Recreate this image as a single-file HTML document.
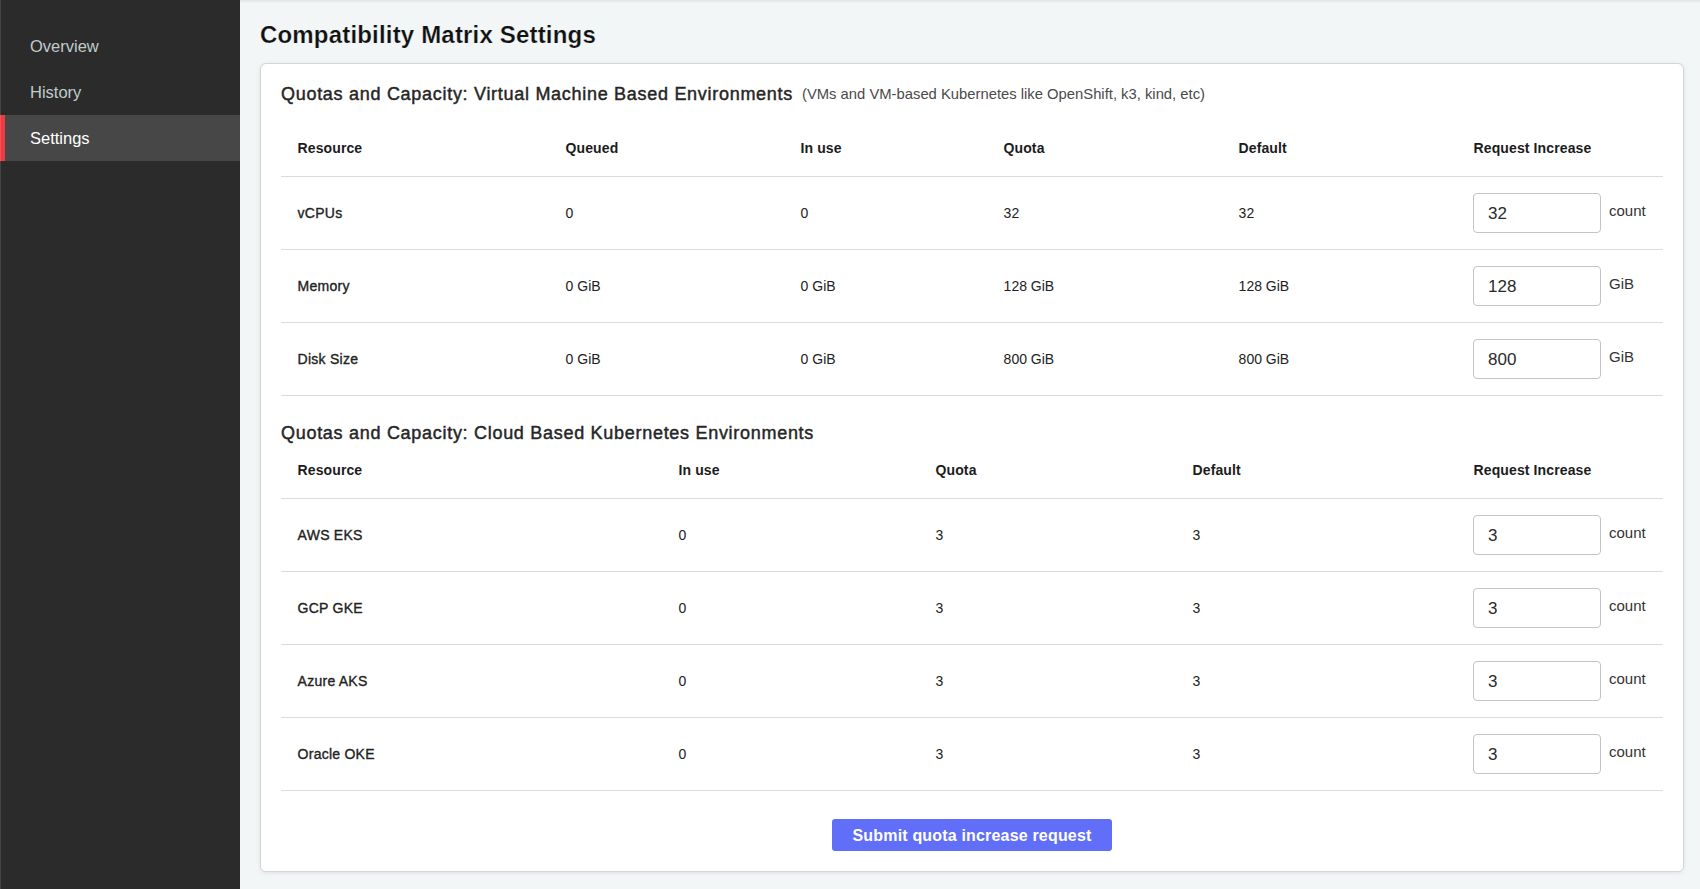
<!DOCTYPE html>
<html>
<head>
<meta charset="utf-8">
<style>
*{box-sizing:border-box;margin:0;padding:0}
html,body{width:1700px;height:889px;overflow:hidden}
body{font-family:"Liberation Sans",sans-serif;background:#f2f6f7;position:relative}
#side{position:absolute;left:0;top:0;width:240px;height:889px;background:#2b2b2b}
#side .it{position:absolute;left:0;width:240px;height:46px;color:#c0cccc;font-size:16.5px;padding-left:30px;line-height:47px}
#side .act{background:#474747;color:#fff}
#side .act::before{content:"";position:absolute;left:0;top:0;width:5px;height:46px;background:#f03a42}
#topshadow{position:absolute;left:240px;top:0;width:1460px;height:3px;background:linear-gradient(#dee2e3,#f2f6f7)}
h1{position:absolute;left:260px;top:21px;font-size:24px;font-weight:bold;color:#111;white-space:nowrap;letter-spacing:0.18px;-webkit-text-stroke:0.22px #f2f6f7}
#card{position:absolute;left:260px;top:63px;width:1424px;height:809px;background:#fff;border:1px solid #d4d5d6;border-radius:6px;box-shadow:0 1px 4px rgba(0,0,0,.09)}
.h2{position:absolute;left:281px;font-size:18px;font-weight:normal;color:#262626;white-space:nowrap;letter-spacing:0.71px;-webkit-text-stroke:0.45px #262626}
.sub{font-size:14.8px;font-weight:normal;color:#4a4a4a;margin-left:9px;position:relative;top:-1px;letter-spacing:0;-webkit-text-stroke:0}
.t{position:absolute;font-size:14px;color:#222;white-space:nowrap;margin-left:0.6px}
.th{font-weight:bold;color:#1c1c1c;letter-spacing:0.12px;margin-left:0.5px}
.rn{font-weight:normal;-webkit-text-stroke:0.35px #222;letter-spacing:0.25px}
.line{position:absolute;left:281px;width:1382px;height:1px;background:#dcdcdc}
.inp{position:absolute;left:1473px;width:128px;height:40px;border:1px solid #c4c4c4;border-radius:4px;background:#fff;font-size:17px;color:#2a2a2a;padding-left:14px;line-height:40px}
.unit{position:absolute;left:1609px;font-size:15px;color:#333}
#btn{position:absolute;left:832px;top:819px;width:280px;height:32px;background:#616ff8;border-radius:3px;color:#fff;font-size:16px;font-weight:bold;text-align:center;line-height:34px;letter-spacing:0.18px}
</style>
</head>
<body>
<div id="side">
  <div class="it" style="top:23px">Overview</div>
  <div class="it" style="top:69px">History</div>
  <div class="it act" style="top:115px">Settings</div>
</div>
<div id="topshadow"></div>
<div style="position:absolute;left:0;top:0;width:1px;height:889px;background:rgba(255,255,255,.12)"></div>
<h1>Compatibility Matrix Settings</h1>
<div id="card"></div>

<div class="h2" style="top:84px">Quotas and Capacity: Virtual Machine Based Environments<span class="sub">(VMs and VM-based Kubernetes like OpenShift, k3, kind, etc)</span></div>

<div class="t th" style="left:297px;top:140px">Resource</div>
<div class="t th" style="left:565px;top:140px">Queued</div>
<div class="t th" style="left:800px;top:140px">In use</div>
<div class="t th" style="left:1003px;top:140px">Quota</div>
<div class="t th" style="left:1238px;top:140px">Default</div>
<div class="t th" style="left:1473px;top:140px">Request Increase</div>
<div class="line" style="top:176px"></div>

<div class="t rn" style="left:297px;top:205px">vCPUs</div>
<div class="t" style="left:565px;top:205px">0</div>
<div class="t" style="left:800px;top:205px">0</div>
<div class="t" style="left:1003px;top:205px">32</div>
<div class="t" style="left:1238px;top:205px">32</div>
<div class="inp" style="top:193px">32</div>
<div class="unit" style="top:202px">count</div>
<div class="line" style="top:249px"></div>

<div class="t rn" style="left:297px;top:278px">Memory</div>
<div class="t" style="left:565px;top:278px">0 GiB</div>
<div class="t" style="left:800px;top:278px">0 GiB</div>
<div class="t" style="left:1003px;top:278px">128 GiB</div>
<div class="t" style="left:1238px;top:278px">128 GiB</div>
<div class="inp" style="top:266px">128</div>
<div class="unit" style="top:275px">GiB</div>
<div class="line" style="top:322px"></div>

<div class="t rn" style="left:297px;top:351px">Disk Size</div>
<div class="t" style="left:565px;top:351px">0 GiB</div>
<div class="t" style="left:800px;top:351px">0 GiB</div>
<div class="t" style="left:1003px;top:351px">800 GiB</div>
<div class="t" style="left:1238px;top:351px">800 GiB</div>
<div class="inp" style="top:339px">800</div>
<div class="unit" style="top:348px">GiB</div>
<div class="line" style="top:395px"></div>

<div class="h2" style="top:423px">Quotas and Capacity: Cloud Based Kubernetes Environments</div>

<div class="t th" style="left:297px;top:462px">Resource</div>
<div class="t th" style="left:678px;top:462px">In use</div>
<div class="t th" style="left:935px;top:462px">Quota</div>
<div class="t th" style="left:1192px;top:462px">Default</div>
<div class="t th" style="left:1473px;top:462px">Request Increase</div>
<div class="line" style="top:498px"></div>

<div class="t rn" style="left:297px;top:527px">AWS EKS</div>
<div class="t" style="left:678px;top:527px">0</div>
<div class="t" style="left:935px;top:527px">3</div>
<div class="t" style="left:1192px;top:527px">3</div>
<div class="inp" style="top:515px">3</div>
<div class="unit" style="top:524px">count</div>
<div class="line" style="top:571px"></div>

<div class="t rn" style="left:297px;top:600px">GCP GKE</div>
<div class="t" style="left:678px;top:600px">0</div>
<div class="t" style="left:935px;top:600px">3</div>
<div class="t" style="left:1192px;top:600px">3</div>
<div class="inp" style="top:588px">3</div>
<div class="unit" style="top:597px">count</div>
<div class="line" style="top:644px"></div>

<div class="t rn" style="left:297px;top:673px">Azure AKS</div>
<div class="t" style="left:678px;top:673px">0</div>
<div class="t" style="left:935px;top:673px">3</div>
<div class="t" style="left:1192px;top:673px">3</div>
<div class="inp" style="top:661px">3</div>
<div class="unit" style="top:670px">count</div>
<div class="line" style="top:717px"></div>

<div class="t rn" style="left:297px;top:746px">Oracle OKE</div>
<div class="t" style="left:678px;top:746px">0</div>
<div class="t" style="left:935px;top:746px">3</div>
<div class="t" style="left:1192px;top:746px">3</div>
<div class="inp" style="top:734px">3</div>
<div class="unit" style="top:743px">count</div>
<div class="line" style="top:790px"></div>

<div id="btn">Submit quota increase request</div>
</body>
</html>
